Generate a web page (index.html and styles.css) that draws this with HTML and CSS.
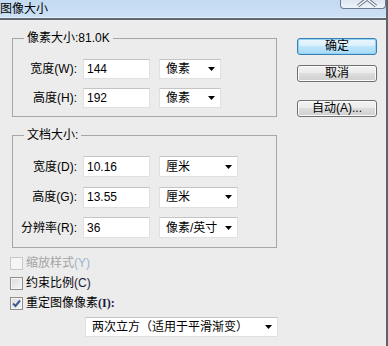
FILE: index.html
```html
<!DOCTYPE html>
<html lang="zh-CN">
<head>
<meta charset="utf-8">
<title>图像大小</title>
<link rel="stylesheet" href="styles.css">
</head>
<body>
<div class="window">
  <div class="titlebar">
    <span class="title">图像大小</span>
    <div class="close">
      <svg width="44" height="8" viewBox="0 0 44 8">
        <path d="M17 6 L26 -1 L35 6" fill="none" stroke="#6b7480" stroke-width="3.4"/>
        <path d="M17 6 L26 -1 L35 6" fill="none" stroke="#ffffff" stroke-width="1.4"/>
      </svg>
    </div>
  </div>
  <div class="content">
    <div class="left">
      <fieldset class="group g1">
        <legend>像素大小:81.0K</legend>
        <div class="rows">
          <div class="row">
            <span class="lbl">宽度(W):</span>
            <div class="input">144</div>
            <div class="select s-short"><span>像素</span><svg class="arrow" width="7" height="4" viewBox="0 0 7 4"><polygon points="0,0 7,0 3.5,4" fill="#000"/></svg></div>
          </div>
          <div class="row">
            <span class="lbl">高度(H):</span>
            <div class="input">192</div>
            <div class="select s-short"><span>像素</span><svg class="arrow" width="7" height="4" viewBox="0 0 7 4"><polygon points="0,0 7,0 3.5,4" fill="#000"/></svg></div>
          </div>
        </div>
      </fieldset>
      <fieldset class="group g2">
        <legend>文档大小:</legend>
        <div class="rows">
          <div class="row">
            <span class="lbl">宽度(D):</span>
            <div class="input">10.16</div>
            <div class="select s-long"><span>厘米</span><svg class="arrow" width="7" height="4" viewBox="0 0 7 4"><polygon points="0,0 7,0 3.5,4" fill="#000"/></svg></div>
          </div>
          <div class="row">
            <span class="lbl">高度(G):</span>
            <div class="input">13.55</div>
            <div class="select s-long"><span>厘米</span><svg class="arrow" width="7" height="4" viewBox="0 0 7 4"><polygon points="0,0 7,0 3.5,4" fill="#000"/></svg></div>
          </div>
          <div class="row">
            <span class="lbl">分辨率(R):</span>
            <div class="input">36</div>
            <div class="select s-long"><span>像素/英寸</span><svg class="arrow" width="7" height="4" viewBox="0 0 7 4"><polygon points="0,0 7,0 3.5,4" fill="#000"/></svg></div>
          </div>
        </div>
      </fieldset>
      <div class="checks">
        <div class="check disabled"><span class="box"></span><span>缩放样式<span class="acc">(Y)</span></span></div>
        <div class="check"><span class="box"></span><span>约束比例<span class="acc-c">(C)</span></span></div>
        <div class="check"><span class="box"><svg width="11" height="11" viewBox="0 0 11 11"><path d="M2 5.5 L4.5 8 L9 2.5" fill="none" stroke="#3d5a96" stroke-width="2"/></svg></span><span>重定图像像素<span class="serif">(I):</span></span></div>
      </div>
      <div class="select big"><span>两次立方（适用于平滑渐变）</span><svg class="arrow" width="7" height="4" viewBox="0 0 7 4"><polygon points="0,0 7,0 3.5,4" fill="#000"/></svg></div>
    </div>
    <div class="buttons">
      <div class="btn default">确定</div>
      <div class="btn second">取消</div>
      <div class="btn third">自动(A)...</div>
    </div>
  </div>
</div>
</body>
</html>
```

FILE: styles.css
```css
html, body {
  margin: 0;
  padding: 0;
}
body {
  width: 388px;
  height: 346px;
  overflow: hidden;
  background: #f4f4f4;
  font-family: "Liberation Sans", "Noto Sans CJK SC", sans-serif;
  font-size: 12px;
  line-height: 14px;
  color: #000;
}
.window {
  width: 388px;
  height: 346px;
  box-sizing: border-box;
  border-right: 2px solid #5f6368;
  background: #ececec;
  display: flex;
  flex-direction: column;
}
.titlebar {
  height: 18px;
  flex: none;
  display: flex;
  align-items: flex-start;
  background: linear-gradient(#c3daf1, #cde1f5);
  border-bottom: 2px solid #5e6873;
  box-shadow: inset 0 -1px 0 #e6eff9;
  overflow: hidden;
}
.title {
  margin-left: 0;
  line-height: 18px;
  font-size: 12px;
}
.close {
  margin-left: auto;
  width: 46px;
  height: 9px;
  box-sizing: border-box;
  border: 1px solid #6f7b8a;
  border-top: none;
  border-radius: 0 0 4px 4px;
  background: linear-gradient(#dce7f3, #eef4fa);
  display: flex;
}
.close svg {
  display: block;
}
.content {
  display: flex;
  align-items: flex-start;
  padding-left: 10px;
}
.left {
  width: 268px;
  display: flex;
  flex-direction: column;
}
.group {
  margin: 11px 0 0 2px;
  width: 265px;
  box-sizing: border-box;
  border: 1px solid #a6a6a6;
  padding: 14px 0 8px 0;
  min-inline-size: 0;
}
.group legend {
  margin-left: 11px;
  padding: 0 3px;
  height: 14px;
  line-height: 14px;
}
.g2 {
  padding-bottom: 9px;
}
.rows {
  display: flex;
  flex-direction: column;
  gap: 9px;
}
.g2 .rows {
  gap: 9.5px;
}
.row {
  display: flex;
  align-items: center;
  height: 20px;
}
.g2 .row {
  height: 21px;
}
.lbl {
  width: 64px;
  text-align: right;
  margin-right: 6px;
  white-space: nowrap;
}
.input {
  width: 67px;
  height: 100%;
  box-sizing: border-box;
  background: #fff;
  border: 1px solid #e0e0e0;
  border-top-color: #c4c4c4;
  padding-left: 3px;
  display: flex;
  align-items: center;
}
.select {
  margin-left: 9px;
  height: 100%;
  box-sizing: border-box;
  background: #fff;
  border: 1px solid #e0e0e0;
  border-top-color: #c4c4c4;
  padding: 0 5px 0 6px;
  display: flex;
  align-items: center;
  justify-content: space-between;
  white-space: nowrap;
}
.s-short {
  width: 62px;
}
.s-long {
  width: 79px;
}
.arrow {
  display: block;
  flex: none;
}
.checks {
  margin-top: 5px;
  display: flex;
  flex-direction: column;
}
.check {
  height: 20px;
  display: flex;
  align-items: center;
}
.box {
  width: 13px;
  height: 13px;
  box-sizing: border-box;
  margin-right: 3px;
  border: 1px solid #8e8f8f;
  background: linear-gradient(135deg, #dcdcdc, #f6f6f6);
  box-shadow: inset 0 0 0 1px #f4f4f4;
  display: flex;
  align-items: center;
  justify-content: center;
}
.box svg {
  display: block;
}
.check.disabled {
  color: #a3a3a3;
}
.check.disabled .box {
  border-color: #c8c8c8;
  background: #f5f5f5;
  box-shadow: none;
}
.acc {
  color: #9fb3d0;
}
.acc-c {
  color: #1a1a3a;
}
.serif {
  font-family: "Liberation Serif", serif;
  font-weight: bold;
  color: #1a1a3a;
}
.select.big {
  margin: 4px 0 0 75px;
  width: 193px;
  height: 20px;
  flex: none;
}
.buttons {
  margin-left: 19px;
  margin-top: 18px;
  display: flex;
  flex-direction: column;
}
.btn {
  width: 80px;
  height: 17px;
  box-sizing: border-box;
  border: 1px solid #707070;
  border-radius: 3px;
  background: linear-gradient(#f2f2f2 0%, #ebebeb 50%, #dddddd 50%, #cfcfcf 100%);
  box-shadow: inset 0 0 0 1px #fbfbfb;
  text-align: center;
  line-height: 15px;
  white-space: nowrap;
}
.btn.default {
  border-color: #3c7fb1;
  background: linear-gradient(#eaf6fd 0%, #d9f0fc 50%, #bee6fd 50%, #a7d9f5 100%);
  box-shadow: inset 0 0 0 1px #8ed2f5;
}
.btn.second {
  margin-top: 10px;
}
.btn.third {
  margin-top: 18px;
}
```
